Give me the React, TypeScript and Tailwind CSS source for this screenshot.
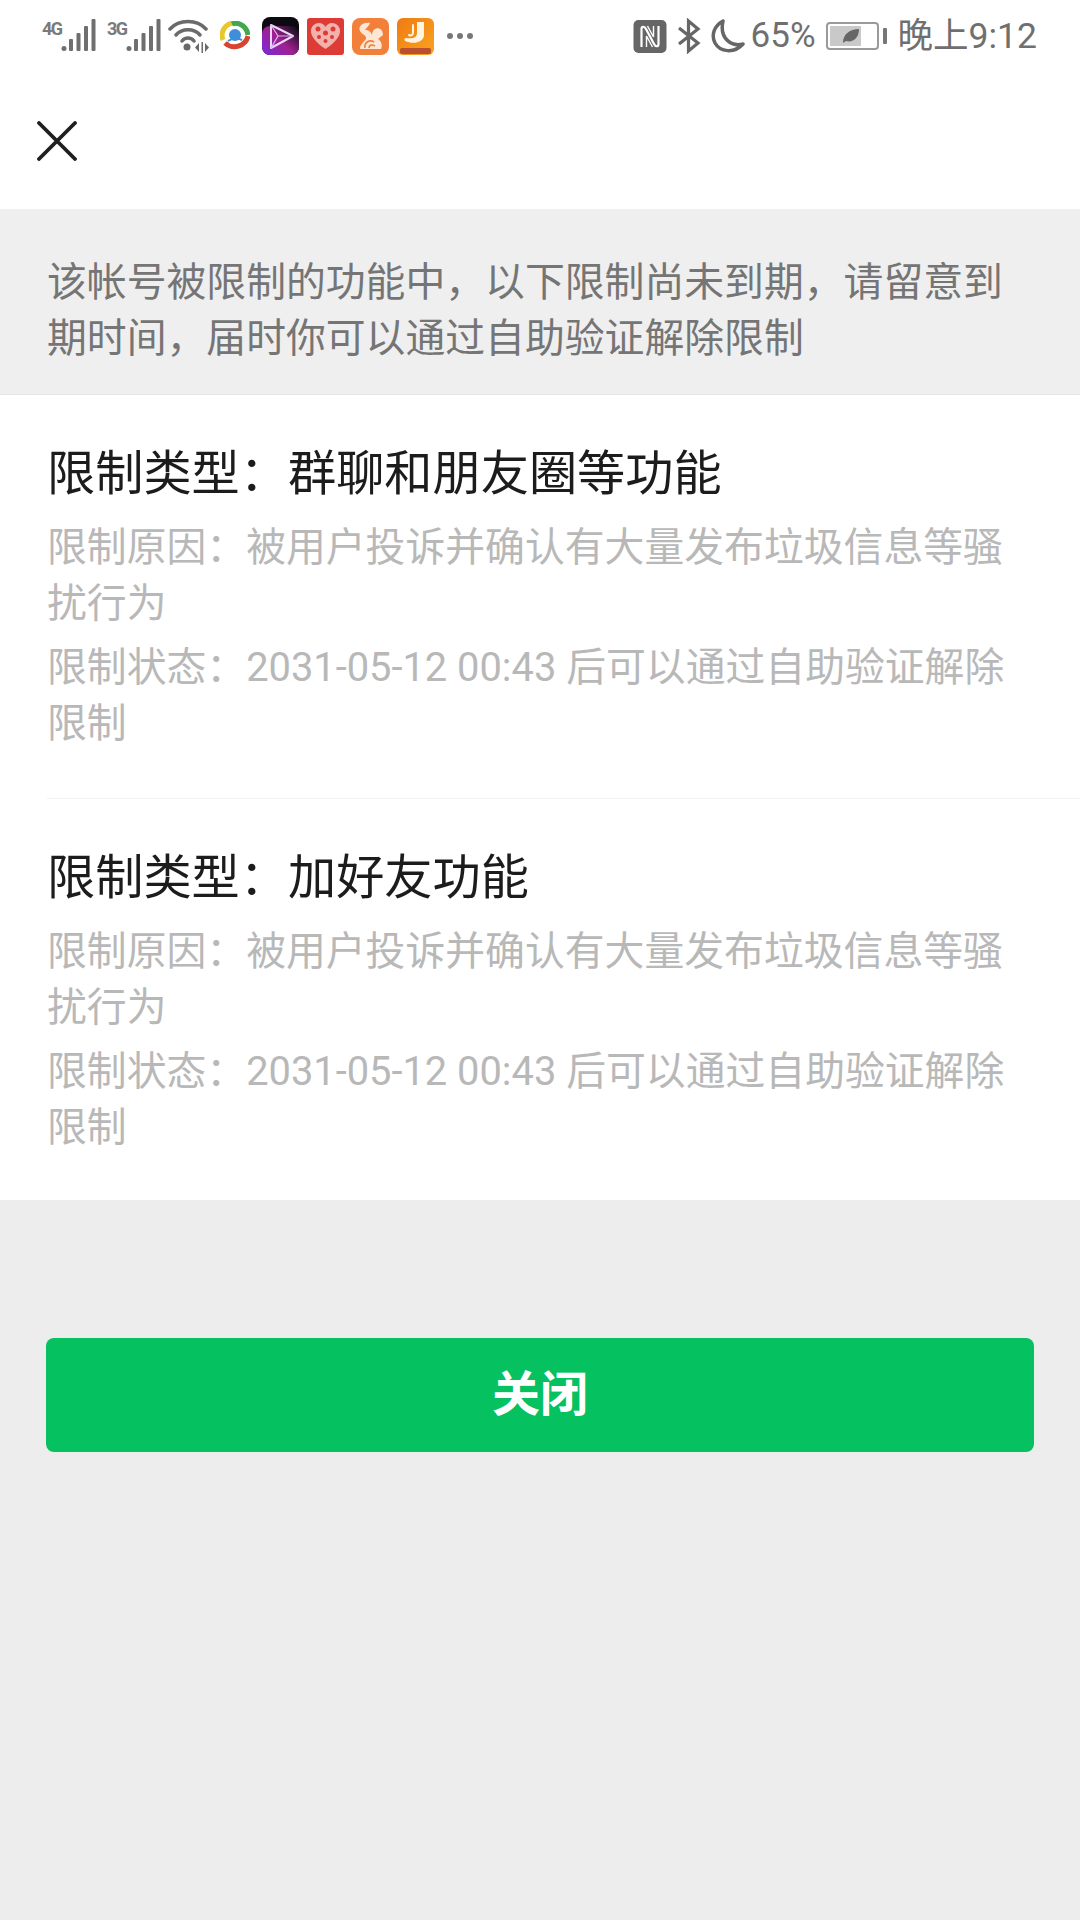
const FONT = "font-['Roboto','Noto_Sans_CJK_SC',sans-serif]";

const Signal = ({ label }: { label: string }) => (
  <div className="flex h-[34px] w-[55px] items-start">
    <span className="mt-[2px] w-[19px] shrink-0 font-['Roboto',sans-serif] text-[18px] leading-[16px] font-bold tracking-[-1.5px] text-[#7a7a7a]">
      {label}
    </span>
    <svg width="36" height="34" viewBox="0 0 36 34" className="shrink-0">
      <circle cx="3" cy="29.500" r="2.500" fill="#6f6f6f" />
      <rect x="8" y="20" width="4" height="12" rx="1" fill="#6f6f6f" />
      <rect x="15.500" y="14" width="4" height="18" rx="1" fill="#6f6f6f" />
      <rect x="23" y="7" width="4" height="25" rx="1" fill="#6f6f6f" />
      <rect x="30.500" y="0" width="4" height="32" rx="1" fill="#6f6f6f" />
    </svg>
  </div>
);

const Wifi = () => (
  <svg width="42" height="36" viewBox="0 0 42 36">
    <g fill="none" stroke="#6a6a6a" strokeWidth="3.500" strokeLinecap="round">
      <path d="M2 11C11 1 29 1 38 11" />
      <path d="M8 17C14 10 26 10 32 17" />
      <path d="M14 23C17 19 23 19 26 23" />
    </g>
    <circle cx="19" cy="29" r="3.500" fill="#6a6a6a" />
    <path d="M31 25l-4 4.500 4 4.500zM35 24v11h-1.500V24zM37 25l4 4.500-4 4.500z" fill="#6a6a6a" />
  </svg>
);

const TencentLogo = () => (
  <svg width="30" height="30" viewBox="0 0 30 30">
    <path d="M3 19C0 11 5 3 13 2" fill="none" stroke="#e8c72c" strokeWidth="5" />
    <path d="M12 3C19 0 27 6 28 14" fill="none" stroke="#42a84f" strokeWidth="5" />
    <path d="M28 15C26 24 14 30 5 22" fill="none" stroke="#d9432f" strokeWidth="5" />
    <circle cx="15" cy="14" r="6" fill="#3f8fd8" />
    <path d="M8 20C12 17 18 17 22 19" fill="none" stroke="#3f8fd8" strokeWidth="2" />
  </svg>
);

const PlayApp = () => (
  <svg width="37" height="38" viewBox="0 0 37 38">
    <defs>
      <linearGradient id="play-bg" x1="0" y1="1" x2="1" y2="0.2">
        <stop offset="0" stopColor="#7a2ae0" />
        <stop offset="0.55" stopColor="#a0208f" />
        <stop offset="1" stopColor="#17101e" />
      </linearGradient>
    </defs>
    <rect width="37" height="38" rx="8" fill="#0c0a10" />
    <rect y="9" width="37" height="29" rx="8" fill="url(#play-bg)" />
    <path d="M9 8L31 19 9 31z" fill="none" stroke="#e9d8f6" strokeWidth="2" strokeLinejoin="round" />
    <path d="M9 8L16 19 9 31M16 19H31" fill="none" stroke="#d8b8ef" strokeWidth="1.200" />
  </svg>
);

const HeartApp = () => (
  <svg width="37" height="37" viewBox="0 0 37 37">
    <rect width="37" height="37" rx="3" fill="#dc3c35" />
    <path d="M18.500 31C8 24 4 18 4 13C4 8 8 5 12 5C15 5 17.500 7 18.500 9C19.500 7 22 5 25 5C29 5 33 8 33 13C33 18 29 24 18.500 31Z" fill="#f2b2ab" />
    <g fill="#dc3c35">
      <circle cx="11" cy="11" r="2.500" />
      <circle cx="18.500" cy="15" r="2.500" />
      <circle cx="26" cy="11" r="2.500" />
      <circle cx="12" cy="19" r="2" />
      <circle cx="25" cy="19" r="2" />
      <circle cx="18.500" cy="23" r="2" />
    </g>
  </svg>
);

const UcApp = () => (
  <svg width="37" height="37" viewBox="0 0 37 37">
    <rect width="37" height="37" rx="8" fill="#f2803a" />
    <path d="M18 5C10 4 6 9 8 13C10 17 15 17 14 21C12 24 8 26 8 31H29C31 27 29 23 26 21L31 17C31 12 27 9 23 11C21 12 20 15 20 17C19 14 17 12 13 12C15 9 17 8 18 5Z" fill="#fde7d4" />
    <path d="M13 30C12 25 17 21 22 24M17 30C17 27 20 26 23 28" fill="none" stroke="#f2803a" strokeWidth="1.600" />
  </svg>
);

const JApp = () => (
  <svg width="37" height="37" viewBox="0 0 37 37">
    <defs>
      <linearGradient id="j-bg" x1="0" y1="0" x2="1" y2="1">
        <stop offset="0" stopColor="#ee7b14" />
        <stop offset="1" stopColor="#fba31e" />
      </linearGradient>
    </defs>
    <rect width="37" height="37" rx="6" fill="url(#j-bg)" />
    <path d="M20 4H27V17C27 24 17 27 8 23C7 22 7 20 9 20C15 21 20 20 20 15Z" fill="#fff4df" />
    <path d="M16 7V15C16 17 14 18 12 17" fill="none" stroke="#fff4df" strokeWidth="2" strokeLinecap="round" />
    <rect x="3" y="30" width="31" height="6" rx="2" fill="#b9502f" />
  </svg>
);

const StatusBar = () => (
  <div className="flex h-[72px] items-center justify-between pr-[43px] pl-[42px]">
    <div className="flex items-center">
      <Signal label="4G" />
      <div className="ml-[10px]">
        <Signal label="3G" />
      </div>
      <div className="ml-[6px]">
        <Wifi />
      </div>
      <div className="ml-[10px]">
        <TencentLogo />
      </div>
      <div className="ml-[12px] flex items-center gap-[8px]">
        <PlayApp />
        <HeartApp />
        <UcApp />
        <JApp />
      </div>
      <div className="ml-[13px] flex gap-[4px]">
        <span className="h-[6px] w-[6px] rounded-full bg-[#777]" />
        <span className="h-[6px] w-[6px] rounded-full bg-[#777]" />
        <span className="h-[6px] w-[6px] rounded-full bg-[#777]" />
      </div>
    </div>
    <div className="flex items-center">
      <svg width="34" height="33" viewBox="0 0 33 33">
        <rect width="33" height="33" rx="5" fill="#666" />
        <path d="M8 27V9C8 6 11 6 12.500 9L20.500 24C22 27 25 27 25 24V6" fill="none" stroke="#fff" strokeWidth="2.200" />
        <path d="M13 27V16L19 27M14 6L20 17V6" fill="none" stroke="#fff" strokeWidth="1.400" />
      </svg>
      <svg width="24" height="36" viewBox="0 0 24 36" className="ml-[10px]">
        <path d="M2 10L21 25 11.500 33V3L21 11 2 26" fill="none" stroke="#666" strokeWidth="3.200" />
      </svg>
      <svg width="34" height="34" viewBox="0 0 34 34" className="ml-[10px]">
        <path d="M12 2C3 7 0 16 4 24C9 33 23 35 32 25C21 28 8 20 12 2Z" fill="none" stroke="#666" strokeWidth="3.500" strokeLinejoin="round" />
      </svg>
      <span className="ml-[6px] font-['Roboto',sans-serif] text-[35px] leading-[40px] text-[#6f6f6f]">65%</span>
      <div className="ml-[10px] flex items-center gap-[4px]">
        <div className="flex h-[28px] w-[53px] items-center rounded-[4px] border-2 border-[#9a9a9a] p-[2px]">
          <div className="flex h-full w-[31px] items-center justify-center bg-[#c9c9c9]">
            <svg width="18" height="16" viewBox="0 0 18 16" className="ml-[12px] shrink-0">
              <path d="M1 15C1 6 8 1 17 1C17 10 11 15 4 13Z" fill="#666" />
            </svg>
          </div>
        </div>
        <div className="h-[16px] w-[4px] rounded-[1px] bg-[#777]" />
      </div>
      <span className={`ml-[11px] ${FONT} text-[35.500px] leading-[40px] text-[#6f6f6f]`}>晚上9:12</span>
    </div>
  </div>
);

const Restriction = ({ type, divider }: { type: string; divider?: boolean }) => (
  <div className={divider ? "border-b border-[#f3f3f3] pt-[46px] pb-[46px]" : "pt-[46px] pb-[44px]"}>
    <div className="pr-[47px]">
      <h2 className="text-[48.200px] leading-[66px] font-normal text-[#1c1c1c]">{type}</h2>
      <div className="mt-[13px] flex flex-col gap-[8px] text-[39.850px] leading-[56px] text-[#b8b8b8]">
        <p>限制原因：被用户投诉并确认有大量发布垃圾信息等骚扰行为</p>
        <p>限制状态：2031-05-12 00:43 后可以通过自助验证解除限制</p>
      </div>
    </div>
  </div>
);

export default function App() {
  return (
    <div className={`flex min-h-[1920px] w-[1080px] flex-col bg-[#ededed] ${FONT}`}>
      <header className="h-[209px] bg-white">
        <StatusBar />
        <div className="flex h-[137px] items-center pl-[37px]">
          <svg width="40" height="40" viewBox="0 0 40 40">
            <path d="M2 2L38 38M38 2L2 38" stroke="#1f1f1f" strokeWidth="3.800" strokeLinecap="round" />
          </svg>
        </div>
      </header>

      <div className="h-[186px] border-b border-[#e6e6e6] bg-[#efefef] px-[47px] pt-[46px] text-[39.850px] leading-[56px] text-[#757575]">
        该帐号被限制的功能中，以下限制尚未到期，请留意到期时间，届时你可以通过自助验证解除限制
      </div>

      <div className="bg-white pl-[47px]">
        <Restriction type="限制类型：群聊和朋友圈等功能" divider />
        <Restriction type="限制类型：加好友功能" />
      </div>

      <button className="mx-[46px] mt-[138px] h-[114px] rounded-[8px] bg-[#06c160] text-[48px] font-bold text-white">
        关闭
      </button>
    </div>
  );
}
